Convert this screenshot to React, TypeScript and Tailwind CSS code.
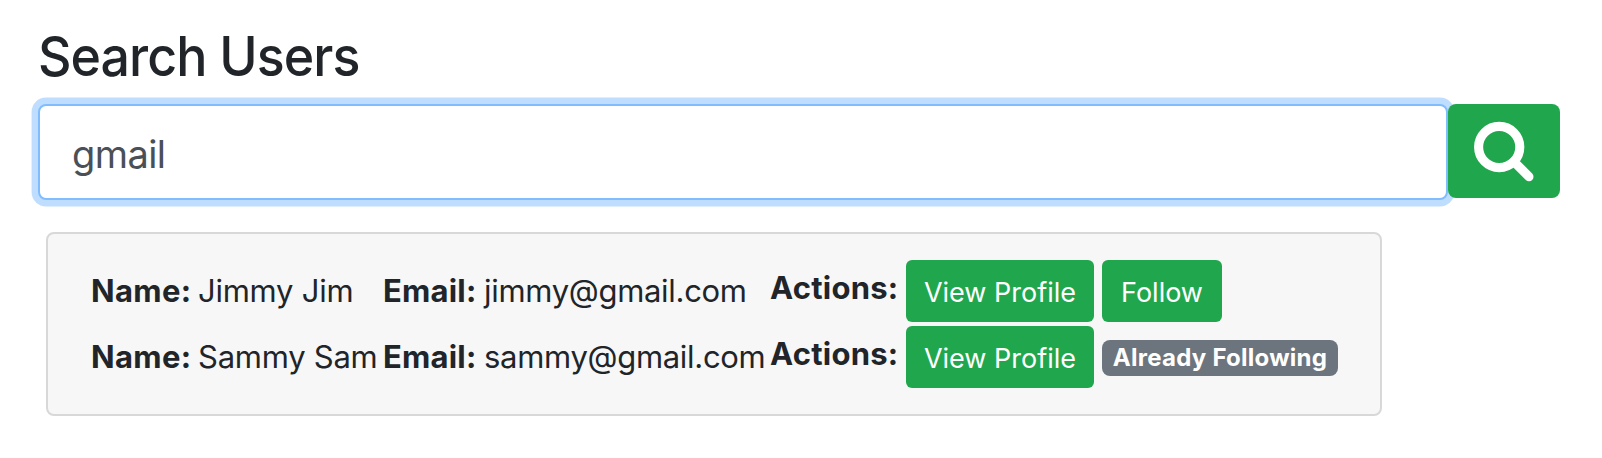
type User = { name: string; email: string; following: boolean };

const users: User[] = [
  { name: "Jimmy Jim", email: "jimmy@gmail.com", following: false },
  { name: "Sammy Sam", email: "sammy@gmail.com", following: true },
];

const buttonClass =
  "flex h-[62px] shrink-0 items-center justify-center rounded-[6px] bg-[#20a74d] pt-0.5 text-[27px] leading-none text-white";

function UserRow({ user }: { user: User }) {
  return (
    <li className="flex h-[62px] whitespace-nowrap text-[31px] leading-[62px]">
      <div className="w-[292px] shrink-0 tracking-[-0.25px]">
        <b className="inline-block w-[107px] font-bold tracking-[0.35px]">Name:</b>
        {user.name}
      </div>
      <div className="w-[387px] shrink-0 tracking-[-0.3px]">
        <b className="inline-block w-[101px] font-bold tracking-[0.2px]">Email:</b>
        {user.email}
      </div>
      <div className="flex items-center gap-2">
        <b className="-mt-1.5 w-[128px] font-bold tracking-[0.25px]">Actions:</b>
        <button className={`${buttonClass} w-[188px]`}>View Profile</button>
        {user.following ? (
          <span className="mt-0.5 flex h-9 w-[236px] items-center justify-center rounded-[8px] bg-[#6c757d] text-[24px] leading-none font-bold tracking-[0.25px] text-white">
            Already Following
          </span>
        ) : (
          <button className={`${buttonClass} w-[120px]`}>Follow</button>
        )}
      </div>
    </li>
  );
}

export default function App() {
  return (
    <main className="min-h-[458px] bg-white pt-[22px] pl-[38px] font-['Inter',sans-serif] text-[#212529]">
      <h1 className="h-[82px] origin-left scale-x-[0.943] text-[55px] leading-[68px] font-medium tracking-[-1px]">
        Search Users
      </h1>
      <form className="flex items-start">
        <input
          className="h-24 w-[1410px] rounded-[8px] border-2 border-[#80bdff] bg-white px-8 pt-1 text-[38px] tracking-[-0.6px] text-[#495057] shadow-[0_0_0_6.4px_rgba(0,123,255,0.25)] outline-none"
          defaultValue="gmail"
        />
        <button
          type="button"
          aria-label="Search"
          className="relative flex h-[94px] w-28 items-center justify-center rounded-[8px] bg-[#20a74d]"
        >
          <svg width="112" height="94" viewBox="0 0 112 94" fill="none" stroke="#fff">
            <circle cx="51.2" cy="43" r="20.6" strokeWidth="9.1" />
            <path d="M66 57.7L81 72.7" strokeWidth="9" strokeLinecap="round" />
          </svg>
        </button>
      </form>
      <ul className="mt-8 ml-2 flex h-[184px] w-[1336px] flex-col gap-1 rounded-[8px] border-2 border-[#d8d8d8] bg-[#f7f7f7] pt-[26px] pl-[43px]">
        {users.map((user) => (
          <UserRow key={user.email} user={user} />
        ))}
      </ul>
    </main>
  );
}
